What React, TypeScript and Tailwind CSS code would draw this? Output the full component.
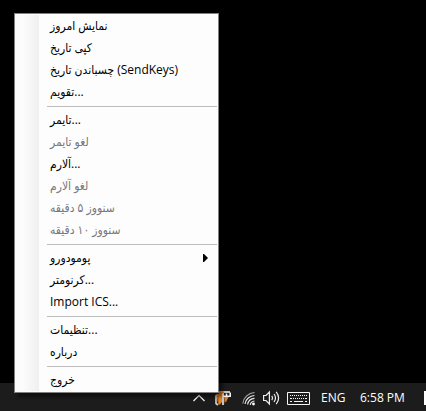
import React from "react";

type Entry =
  | { kind: "item"; label: string; disabled?: boolean; submenu?: boolean }
  | { kind: "separator" };

const entries: Entry[] = [
  { kind: "item", label: "نمایش امروز" },
  { kind: "item", label: "کپی تاریخ" },
  { kind: "item", label: "چسباندن تاریخ (SendKeys)" },
  { kind: "item", label: "تقویم..." },
  { kind: "separator" },
  { kind: "item", label: "تایمر..." },
  { kind: "item", label: "لغو تایمر", disabled: true },
  { kind: "item", label: "آلارم..." },
  { kind: "item", label: "لغو آلارم", disabled: true },
  { kind: "item", label: "سنووز ۵ دقیقه", disabled: true },
  { kind: "item", label: "سنووز ۱۰ دقیقه", disabled: true },
  { kind: "separator" },
  { kind: "item", label: "پومودورو", submenu: true },
  { kind: "item", label: "کرنومتر..." },
  { kind: "item", label: "Import ICS..." },
  { kind: "separator" },
  { kind: "item", label: "تنظیمات..." },
  { kind: "item", label: "درباره" },
  { kind: "separator" },
  { kind: "item", label: "خروج" },
];

function ContextMenu() {
  return (
    <div
      role="menu"
      className="absolute bottom-[18px] left-[14px] flex w-[205px] border border-[#808080] bg-[#fdfdfd] py-px shadow-[4px_4px_3px_rgba(0,0,0,0.45)]"
    >
      <div className="w-6 shrink-0 bg-linear-to-r from-[#fcfcfc] from-30% to-[#f0f0f0]" />
      <div className="min-w-0 flex-1">
        {entries.map((entry, index) =>
          entry.kind === "separator" ? (
            <div key={index} role="separator" className="ml-2 mr-px flex h-[6px] items-center">
              <div className="h-px w-full bg-[#bdbdbd]" />
            </div>
          ) : (
            <button
              key={index}
              role="menuitem"
              disabled={entry.disabled}
              className="flex h-[22px] w-full items-center justify-between pl-[11px] pr-[10px] text-left text-xs whitespace-nowrap text-black disabled:text-[#77777b]"
            >
              <span>{entry.label}</span>
              {entry.submenu && (
                <svg width="5" height="8" viewBox="0 0 5 8" aria-hidden="true">
                  <path d="M0 0H1L5 4L1 8H0Z" fill="#000" />
                </svg>
              )}
            </button>
          )
        )}
      </div>
    </div>
  );
}

function ChevronIcon() {
  return (
    <svg width="12" height="16" viewBox="0 0 12 16" fill="none" stroke="#f0f0f0" strokeWidth="1.3">
      <path d="M0.5 11L6 5.5L11.5 11" />
    </svg>
  );
}

function CalendarIcon() {
  return (
    <svg width="17" height="16" viewBox="0 0 17 16">
      <path d="M3 1H15V3H3Z" fill="#c9c1ba" />
      <path d="M1 4H4V1.5H9V5L7 8V12L5 14.5H3.5Z" fill="#e8821e" />
      <path d="M9 7H13.5L11 12H9.5Z" fill="#e8821e" />
      <path d="M1 5V13.5L3 15" fill="none" stroke="#d8cfc8" strokeWidth="1.6" />
      <path d="M8 15V3.5M8 6.2H15.2V2.5M11.5 6V3.5" fill="none" stroke="#f3f0ed" strokeWidth="1.6" />
      <path d="M3 6V13M9.7 7.5V14" stroke="#71451f" strokeWidth="0.7" />
    </svg>
  );
}

function WifiIcon() {
  return (
    <svg width="13" height="16" viewBox="0 0 13 16" fill="none" stroke="#e8e8e8">
      <path d="M0.8 13.5A12.5 12.5 0 0 1 12.5 2.5" stroke="#a8a8a8" strokeWidth="1.1" />
      <path d="M3 14A10 10 0 0 1 12.5 5.5" strokeWidth="1.2" />
      <path d="M5.6 14.5A7.5 7.5 0 0 1 12.5 8.4" strokeWidth="1.2" />
      <path d="M8.2 14.8A5 5 0 0 1 12.5 11" strokeWidth="1.2" />
      <circle cx="11.5" cy="14" r="1.4" fill="#fff" stroke="none" />
    </svg>
  );
}

function SpeakerIcon() {
  return (
    <svg width="17" height="16" viewBox="0 0 17 16" fill="none" stroke="#eeeeee" strokeWidth="1.2">
      <path d="M0.6 5.5H3L6.4 2V14L3 10.5H0.6Z" />
      <path d="M8.8 5.8Q10.4 8 8.8 10.2" />
      <path d="M11 4Q14 8 11 12" />
      <path d="M13.2 1.8Q18 8 13.2 14.2" />
    </svg>
  );
}

function KeyboardIcon() {
  return (
    <svg width="23" height="16" viewBox="0 0 23 16" fill="none" stroke="#f6f6f6">
      <path d="M0.5 2.5H22.5V14.5H0.5Z" />
      <path d="M3 5.5H20" strokeDasharray="1 1" shapeRendering="crispEdges" />
      <path d="M3 8.5H5M6 8.5H7M8 8.5H9M10 8.5H11M12 8.5H13M14 8.5H15M16 8.5H17M18 8.5H20" />
      <path d="M3 11.5H5M7 11.5H16M18 11.5H20" />
    </svg>
  );
}

function Taskbar() {
  return (
    <footer className="flex h-7 items-center justify-end bg-[#1c1c1c] pt-px text-xs text-white">
      <button aria-label="Show hidden icons" className="mr-[10px]">
        <ChevronIcon />
      </button>
      <button aria-label="Calendar" className="mr-[10px]">
        <CalendarIcon />
      </button>
      <button aria-label="Network" className="mr-2">
        <WifiIcon />
      </button>
      <button aria-label="Volume" className="mr-[7px]">
        <SpeakerIcon />
      </button>
      <button aria-label="Touch keyboard" className="mr-[11px]">
        <KeyboardIcon />
      </button>
      <button className="w-[39px] text-left">ENG</button>
      <button className="w-16 text-left whitespace-nowrap">6:58 PM</button>
      <button aria-label="Notifications" className="h-[14px] w-[2px] bg-white" />
    </footer>
  );
}

export default function App() {
  return (
    <main
      dir="ltr"
      className="relative flex min-h-screen flex-col justify-end overflow-hidden bg-black font-['Open_Sans','DejaVu_Sans_Condensed','DejaVu_Sans',sans-serif]"
    >
      <Taskbar />
      <ContextMenu />
    </main>
  );
}
